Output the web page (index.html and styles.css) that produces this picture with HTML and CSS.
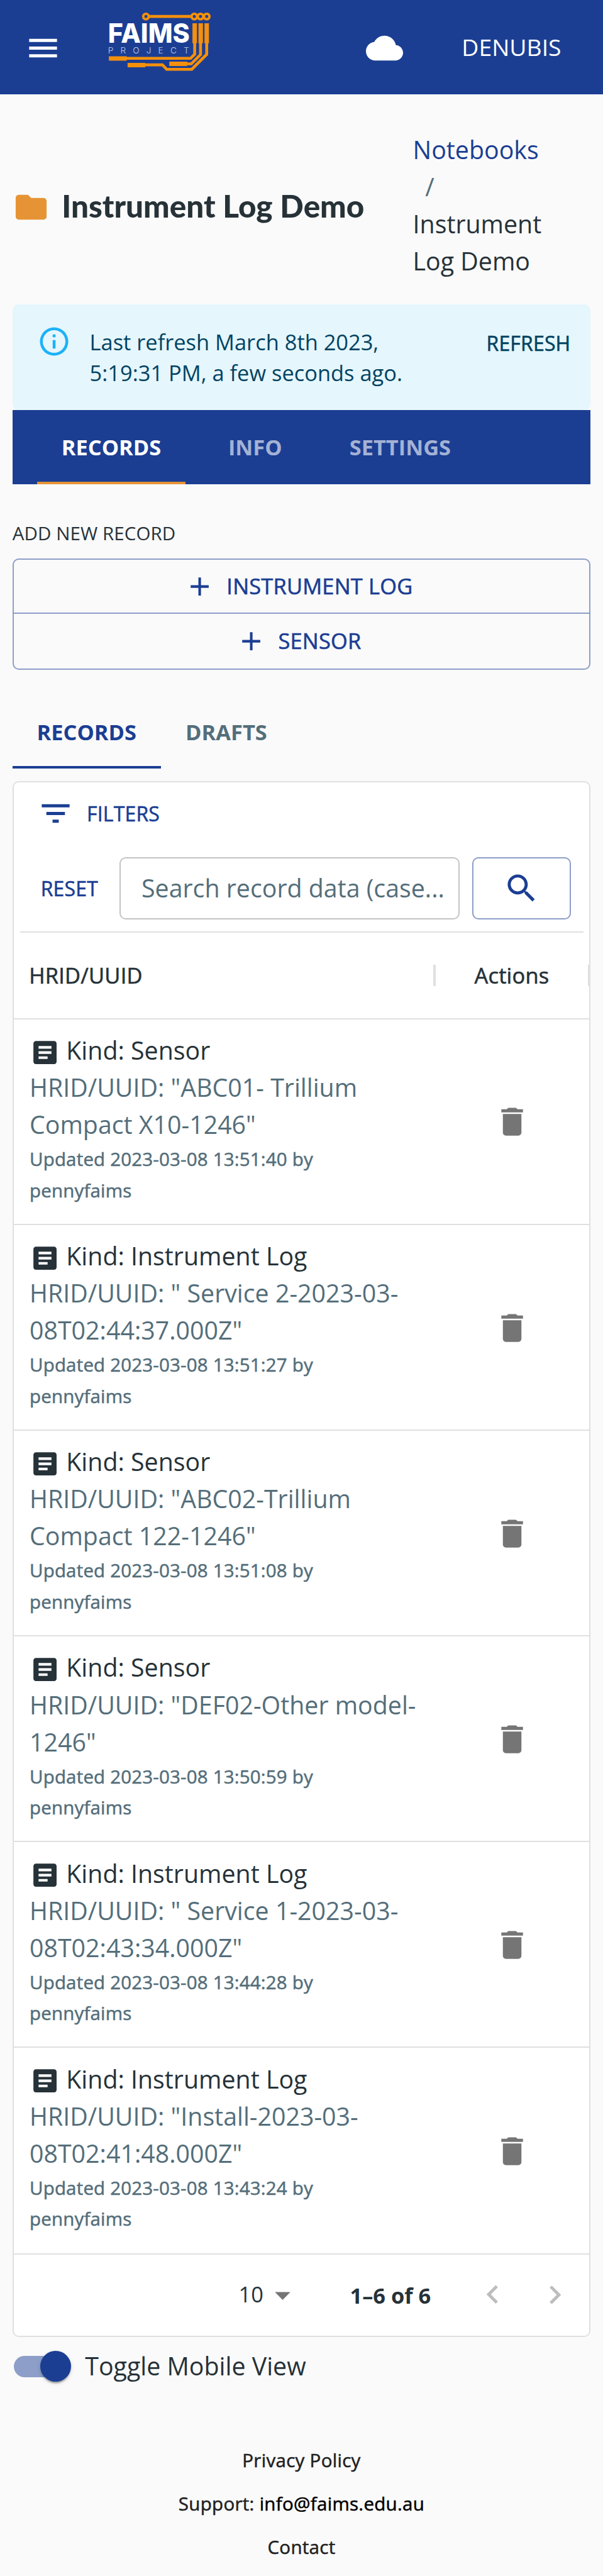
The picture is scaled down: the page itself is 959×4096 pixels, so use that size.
FILE: index.html
```html
<!DOCTYPE html>
<html lang="en">
<head>
<meta charset="utf-8">
<title>Instrument Log Demo</title>
<link rel="stylesheet" href="styles.css">
</head>
<body>
<svg class="sprite" aria-hidden="true">
  <symbol id="article" viewBox="0 0 24 24"><path d="M19 3H5c-1.1 0-2 .9-2 2v14c0 1.1.9 2 2 2h14c1.1 0 2-.9 2-2V5c0-1.1-.9-2-2-2zm-5 14H7v-2h7v2zm3-4H7v-2h10v2zm0-4H7V7h10v2z"/></symbol>
  <symbol id="trash" viewBox="0 0 24 24"><path d="M6 19c0 1.1.9 2 2 2h8c1.1 0 2-.9 2-2V7H6v12zM19 4h-3.500l-1-1h-5l-1 1H5v2h14V4z"/></symbol>
  <symbol id="plus" viewBox="0 0 24 24"><path d="M19 13h-6v6h-2v-6H5v-2h6V5h2v6h6v2z"/></symbol>
</svg>

<header class="appbar">
  <svg class="icon menu" viewBox="0 0 24 24"><path d="M3 18h18v-2H3v2zm0-5h18v-2H3v2zm0-7v2h18V6H3z"/></svg>
  <svg class="logo" viewBox="60 36 604 354">
    <g fill="none" stroke="#f4900c">
      <g stroke-width="14">
        <circle cx="280" cy="66" r="16"/><circle cx="562" cy="66" r="16"/><circle cx="598" cy="66" r="16"/><circle cx="634" cy="66" r="16"/>
      </g>
      <g stroke-width="17">
        <path d="M299 66H543"/>
        <path d="M165 310H540L564 286V215"/>
        <path d="M515 342H544L598 288V215"/>
        <path d="M270 348H376L401 374H547L634 287V215"/>
      </g>
      <g stroke-width="26">
        <path d="M564 106V222M599 106V222M634 106V222M64 311H168M416 342H520M173 349H276"/>
      </g>
    </g>
    <text class="logo-name" x="59" y="220" textLength="476" lengthAdjust="spacingAndGlyphs">FAIMS</text>
    <text class="logo-sub" x="59" y="281" textLength="472" lengthAdjust="spacing">PROJECT</text>
  </svg>
  <svg class="icon cloud" viewBox="0 0 24 24"><path d="M19.350 10.040C18.670 6.590 15.640 4 12 4 9.110 4 6.600 5.640 5.350 8.040 2.340 8.360 0 10.910 0 14c0 3.310 2.690 6 6 6h13c2.760 0 5-2.240 5-5 0-2.640-2.050-4.780-4.650-4.960z"/></svg>
  <span class="user">DENUBIS</span>
</header>

<main class="page">
  <div class="heading">
    <svg class="icon folder" viewBox="0 0 24 24"><path d="M10 4H4c-1.100 0-1.990.9-1.990 2L2 18c0 1.100.9 2 2 2h16c1.100 0 2-.9 2-2V8c0-1.100-.9-2-2-2h-8l-2-2z"/></svg>
    <h1 class="title">Instrument Log Demo</h1>
    <nav class="crumbs">
      <a class="crumb-link">Notebooks</a>
      <span class="crumb-sep">/</span>
      <span>Instrument<br>Log Demo</span>
    </nav>
  </div>

  <div class="alert">
    <svg class="alert-icon" viewBox="0 0 24 24"><path d="M11,9H13V7H11M12,20C7.590,20 4,16.410 4,12C4,7.590 7.590,4 12,4C16.410,4 20,7.590 20,12C20,16.410 16.410,20 12,20M12,2A10,10 0 0,0 2,12A10,10 0 0,0 12,22A10,10 0 0,0 22,12A10,10 0 0,0 12,2M11,17H13V11H11V17Z"/></svg>
    <p class="alert-text">Last refresh March 8th 2023,<br>5:19:31 PM, a few seconds ago.</p>
    <span class="alert-action medium">REFRESH</span>
  </div>

  <div class="tabs tabs-main">
    <span class="tab active">RECORDS</span>
    <span class="tab">INFO</span>
    <span class="tab">SETTINGS</span>
  </div>

  <div class="overline">ADD NEW RECORD</div>
  <div class="group medium">
    <div class="group-btn"><svg class="plus"><use href="#plus"/></svg><span>INSTRUMENT LOG</span></div>
    <div class="group-btn"><svg class="plus"><use href="#plus"/></svg><span>SENSOR</span></div>
  </div>

  <div class="tabs tabs-sub">
    <span class="tab active">RECORDS</span>
    <span class="tab">DRAFTS</span>
  </div>

  <section class="card">
    <div class="filters">
      <svg class="icon" viewBox="0 0 24 24"><path d="M10 18h4v-2h-4v2zM3 6v2h18V6H3zm3 7h12v-2H6v2z"/></svg>
      <span class="medium">FILTERS</span>
    </div>
    <div class="search">
      <span class="reset medium">RESET</span>
      <div class="field">Search record data (case...</div>
      <div class="search-btn"><svg class="icon" viewBox="0 0 24 24"><path d="M15.500 14h-.79l-.28-.27C15.410 12.590 16 11.110 16 9.500 16 5.910 13.090 3 9.500 3S3 5.910 3 9.500 5.910 16 9.500 16c1.610 0 3.090-.59 4.230-1.570l.27.28v.79l5 4.990L20.490 19l-4.990-5zm-6 0C7.010 14 5 11.990 5 9.500S7.010 5 9.500 5 14 7.010 14 9.500 11.990 14 9.500 14z"/></svg></div>
    </div>
    <div class="thead medium">
      <div class="th">HRID/UUID</div>
      <div class="th th-actions">Actions</div>
    </div>

    <div class="row">
      <div class="cell">
        <div class="kind"><svg class="article"><use href="#article"/></svg><span>Kind: Sensor</span></div>
        <div class="hrid">HRID/UUID: "ABC01- Trillium<br>Compact X10-1246"</div>
        <div class="updated medium">Updated 2023-03-08 13:51:40 by<br>pennyfaims</div>
      </div>
      <div class="action"><svg class="icon"><use href="#trash"/></svg></div>
    </div>
    <div class="row">
      <div class="cell">
        <div class="kind"><svg class="article"><use href="#article"/></svg><span>Kind: Instrument Log</span></div>
        <div class="hrid">HRID/UUID: " Service 2-2023-03-<br>08T02:44:37.000Z"</div>
        <div class="updated medium">Updated 2023-03-08 13:51:27 by<br>pennyfaims</div>
      </div>
      <div class="action"><svg class="icon"><use href="#trash"/></svg></div>
    </div>
    <div class="row">
      <div class="cell">
        <div class="kind"><svg class="article"><use href="#article"/></svg><span>Kind: Sensor</span></div>
        <div class="hrid">HRID/UUID: "ABC02-Trillium<br>Compact 122-1246"</div>
        <div class="updated medium">Updated 2023-03-08 13:51:08 by<br>pennyfaims</div>
      </div>
      <div class="action"><svg class="icon"><use href="#trash"/></svg></div>
    </div>
    <div class="row">
      <div class="cell">
        <div class="kind"><svg class="article"><use href="#article"/></svg><span>Kind: Sensor</span></div>
        <div class="hrid">HRID/UUID: "DEF02-Other model-<br>1246"</div>
        <div class="updated medium">Updated 2023-03-08 13:50:59 by<br>pennyfaims</div>
      </div>
      <div class="action"><svg class="icon"><use href="#trash"/></svg></div>
    </div>
    <div class="row">
      <div class="cell">
        <div class="kind"><svg class="article"><use href="#article"/></svg><span>Kind: Instrument Log</span></div>
        <div class="hrid">HRID/UUID: " Service 1-2023-03-<br>08T02:43:34.000Z"</div>
        <div class="updated medium">Updated 2023-03-08 13:44:28 by<br>pennyfaims</div>
      </div>
      <div class="action"><svg class="icon"><use href="#trash"/></svg></div>
    </div>
    <div class="row last">
      <div class="cell">
        <div class="kind"><svg class="article"><use href="#article"/></svg><span>Kind: Instrument Log</span></div>
        <div class="hrid">HRID/UUID: "Install-2023-03-<br>08T02:41:48.000Z"</div>
        <div class="updated medium">Updated 2023-03-08 13:43:24 by<br>pennyfaims</div>
      </div>
      <div class="action"><svg class="icon"><use href="#trash"/></svg></div>
    </div>

    <div class="pager">
      <span class="page-size">10</span>
      <svg class="icon caret" viewBox="0 0 24 24"><path d="M7 10l5 5 5-5z"/></svg>
      <span class="range">1–6 of 6</span>
      <svg class="icon prev" viewBox="0 0 24 24"><path d="M15.410 16.090l-4.580-4.590 4.580-4.590L14 5.500l-6 6 6 6z"/></svg>
      <svg class="icon next" viewBox="0 0 24 24"><path d="M8.590 16.340l4.580-4.590-4.580-4.590L10 5.750l6 6-6 6z"/></svg>
    </div>
  </section>

  <div class="toggle">
    <span class="switch"><span class="thumb"></span></span>
    <span>Toggle Mobile View</span>
  </div>
</main>

<footer class="footer medium">
  <div>Privacy Policy</div>
  <div>Support: <a class="mail">info@faims.edu.au</a></div>
  <div>Contact</div>
</footer>
</body>
</html>
```
FILE: styles.css
```css
:root {
  --primary: #1b3e93;
  --primary-soft: #8d9ec9;
  --accent: #e69335;
  --ink: #263238;
  --muted: #546e7a;
  --line: #e0e0e0;
}

html { font-size: 24.59px; }

*, *::before, *::after { box-sizing: border-box; }

body {
  margin: 0;
  background: #fafafa;
  color: var(--ink);
  font-family: "Open Sans", "Noto Sans", sans-serif;
  font-size: 1.6rem;
  line-height: 2.4rem;
}

svg { display: block; flex: none; fill: currentColor; }
.sprite { display: none; }
.icon { width: 2.4rem; height: 2.4rem; }

/* Medium weight, built from the regular face */
.medium {
  font-weight: 400;
  letter-spacing: 0.006em;
  -webkit-text-stroke: 0.018em currentColor;
}

.appbar {
  display: flex;
  align-items: center;
  height: 6.1rem;
  padding: 0 2.7rem 0 1.6rem;
  background: var(--primary);
  color: #fff;
}
.menu, .cloud { margin-top: 0.1rem; }
.logo { width: 6.71rem; height: 3.93rem; margin: 0 0 0.7rem 3rem; }
.logo-name { fill: #fff; font: 800 154px Inter, sans-serif; }
.logo-sub { fill: #c3cce2; font: 300 50px Inter, sans-serif; }
.cloud { margin-left: auto; }
.user { margin-left: 3.8rem; font-size: 1.52rem; }

.page { padding: 2.4rem 0.8rem 0; }

.heading { display: flex; align-items: center; height: 9.6rem; }
.folder { margin-top: 0.2rem; color: var(--accent); }
.title {
  width: 22.7rem;
  margin: 0 0 0 0.8rem;
  font: 900 2.01rem/2.4rem Lato, sans-serif;
  white-space: nowrap;
}
.crumbs { display: flex; flex-direction: column; }
.crumb-link { color: var(--primary); }
.crumb-sep { padding-left: 0.8rem; color: var(--muted); }

.alert {
  display: flex;
  height: 6.8rem;
  margin-top: 1.6rem;
  padding: 0.6rem 1.3rem 0.6rem 1.6rem;
  border-radius: 0.4rem;
  background: #e5f6fd;
  color: #014361;
  font-size: 1.4rem;
  line-height: 2rem;
}
.alert-icon { width: 2.2rem; height: 2.2rem; margin-top: 0.7rem; color: #1cb2f8; }
.alert-text { margin: 0.8rem 0 0 1.2rem; white-space: nowrap; }
.alert-action { margin: 0.9rem 0 0 auto; font-size: 1.3rem; }

.tabs { display: flex; height: 4.8rem; font-size: 1.4rem; font-weight: 700; }
.tab {
  display: flex;
  align-items: center;
  justify-content: center;
  padding: 0 1.6rem;
  border-bottom: 0.2rem solid transparent;
  border-top: 0.2rem solid transparent;
}
.tab.active { width: 9.6rem; }
.tabs-main { padding-left: 1.6rem; background: var(--primary); color: #a4b2d4; }
.tabs-main .tab { min-width: 9rem; }
.tabs-main .active { border-bottom-color: var(--accent); color: #fff; }
.tabs-sub { margin-top: 1.6rem; color: var(--muted); }
.tabs-sub .active { border-bottom-color: var(--primary); color: var(--primary); }

.overline { margin: 2.15rem 0 0.65rem; font-size: 1.2rem; line-height: 2rem; letter-spacing: 0.003em; }

.group {
  height: 7.2rem;
  border: 0.1rem solid var(--primary-soft);
  border-radius: 0.4rem;
  color: var(--primary);
  font-size: 1.4rem;
}
.group-btn {
  display: flex;
  align-items: center;
  justify-content: center;
  gap: 0.75rem;
  height: 3.5rem;
  padding-right: 0.4rem;
}
.group-btn:first-child { border-bottom: 0.1rem solid var(--primary-soft); }
.plus { width: 2rem; height: 2rem; margin-top: 0.1rem; }

.card {
  margin-top: 0.8rem;
  height: 100.6rem;
  border: 0.1rem solid var(--line);
  border-radius: 0.4rem;
  background: #fff;
  overflow: hidden;
}
.filters, .search { color: var(--primary); font-size: 1.3rem; }
.filters {
  display: flex;
  align-items: center;
  gap: 0.8rem;
  padding: 0.83rem 0 0 1.53rem;
}
.search {
  display: flex;
  align-items: center;
  height: 6.5rem;
  margin: 0 0.4rem;
  padding: 0.84rem 0.8rem 0 1.35rem;
  border-bottom: 0.1rem solid var(--line);
}
.reset { width: 5.5rem; }
.field {
  display: flex;
  align-items: center;
  width: 22rem;
  height: 4rem;
  margin-left: -0.4rem;
  padding-left: 1.34rem;
  border: 0.1rem solid #c4c4c4;
  border-radius: 0.4rem;
  color: var(--muted);
  font-size: 1.6rem;
  white-space: nowrap;
}
.search-btn {
  display: flex;
  align-items: center;
  justify-content: center;
  width: 6.4rem;
  height: 4rem;
  margin-left: 0.8rem;
  border: 0.1rem solid var(--primary-soft);
  border-radius: 0.4rem;
}

.thead {
  display: grid;
  grid-template-columns: 27.3rem 10rem;
  align-items: center;
  height: 5.6rem;
  border-bottom: 0.1rem solid var(--line);
  font-size: 1.4rem;
}
.th { height: 1.4rem; padding-left: 1rem; border-right: 0.2rem solid var(--line); line-height: 1.4rem; }
.th-actions { padding: 0; text-align: center; }

.row {
  display: grid;
  grid-template-columns: 27.25rem 10rem;
  height: 13.3rem;
  border-bottom: 0.1rem solid var(--line);
}
.row.last { border-bottom: 0; }
.cell { padding: 0.84rem 0 0 1.03rem; white-space: nowrap; }
.kind { display: flex; align-items: center; gap: 0.37rem; height: 2.4rem; }
.article { width: 2rem; height: 2rem; margin-top: 0.2rem; }
.hrid { color: var(--muted); }
.updated { color: var(--muted); font-size: 1.2rem; line-height: 2rem; }
.action { display: flex; align-items: center; justify-content: center; padding-top: 0.06rem; color: #757575; }

.pager {
  display: flex;
  align-items: center;
  height: 5.3rem;
  padding-left: 14.55rem;
  border-top: 0.1rem solid var(--line);
  font-size: 1.4rem;
}
.page-size { width: 1.65rem; margin-bottom: 0.1rem; }
.caret { color: #757575; }
.range { width: 8.05rem; margin-left: 3.15rem; font-weight: 700; }
.prev, .next { color: #bdbdbd; }
.next { margin-left: 1.6rem; }

.toggle { display: flex; align-items: center; height: 3.8rem; padding: 0.05rem 0 0 0.1rem; }
.switch {
  display: flex;
  align-items: center;
  justify-content: flex-end;
  width: 3.4rem;
  height: 1.4rem;
  margin-right: 1.2rem;
  border-radius: 0.7rem;
  background: var(--primary-soft);
}
.thumb {
  flex: none;
  width: 2rem;
  height: 2rem;
  margin-right: -0.3rem;
  border-radius: 50%;
  background: var(--primary);
  box-shadow: 0 0.2rem 0.1rem -0.1rem rgba(0, 0, 0, .2), 0 0.1rem 0.1rem rgba(0, 0, 0, .14), 0 0.1rem 0.3rem rgba(0, 0, 0, .12);
}

.footer {
  padding-top: 2.8rem;
  color: #212121;
  font-size: 1.2rem;
  line-height: 2.8rem;
  letter-spacing: 0.01em;
  text-align: center;
}
.mail { color: #000; }
```
